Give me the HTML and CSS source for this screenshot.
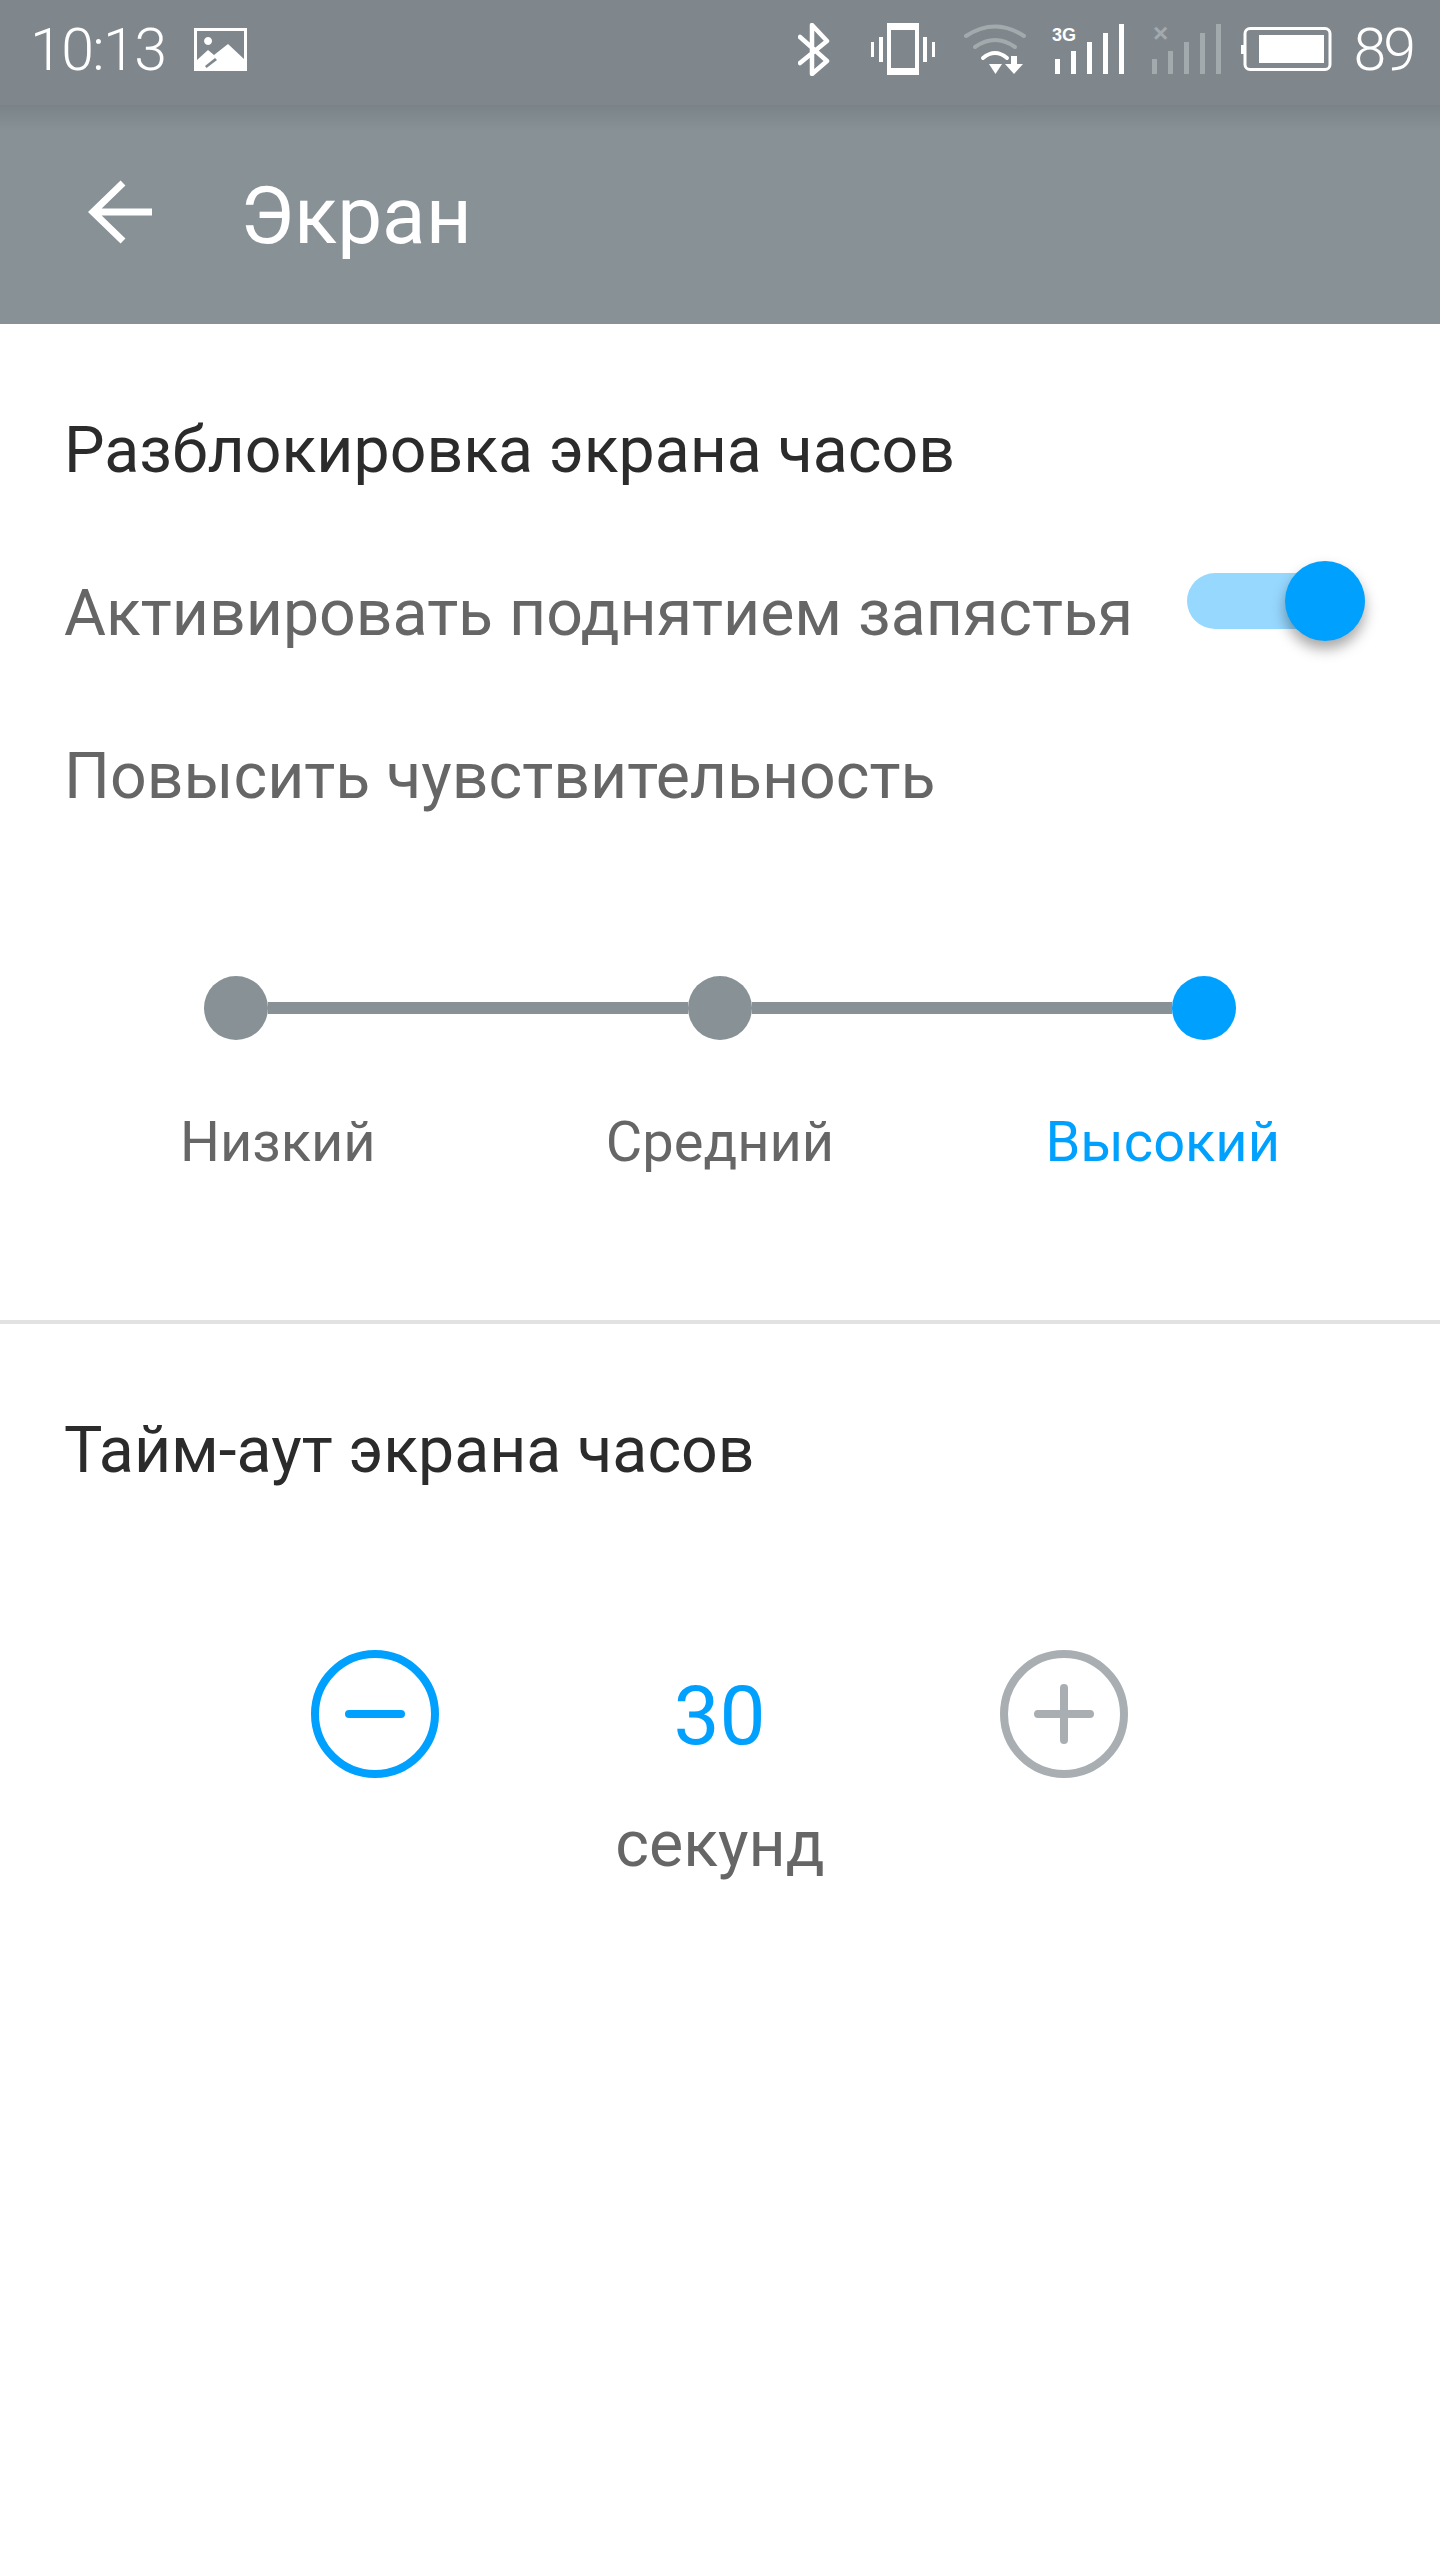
FILE: index.html
```html
<!DOCTYPE html>
<html lang="ru">
<head>
<meta charset="utf-8">
<title>Экран</title>
<link rel="stylesheet" href="styles.css">
</head>
<body>
<header class="status-bar">
  <div class="status-left">
    <span class="clock">10:13</span>
    <svg class="icon-picture" viewBox="0 0 53 43"><path fill="#fff" fill-rule="evenodd" d="M0 0H53V43H0ZM3 3V32L14 22 20 27 34 16 50 31V3ZM14 9a4 4 0 1 0 .1 0ZM21 30 11 38 12.5 40 23 32Z"/></svg>
  </div>
  <div class="status-right">
    <svg class="icon-bt" viewBox="0 0 32 53" fill="none" stroke="#fff" stroke-width="4.500" stroke-linecap="round" stroke-linejoin="round"><path d="M2 14 29 38 14 51V2L29 18 2 40"/></svg>
    <svg class="icon-vib" viewBox="0 0 64 52" fill="#fff"><path fill-rule="evenodd" d="M16 0H48V52H16ZM20 7V45H44V7Z"/><rect x="0" y="19" width="3" height="15"/><rect x="8" y="14" width="4" height="25"/><rect x="52" y="14" width="4" height="25"/><rect x="61" y="19" width="3" height="15"/></svg>
    <svg class="icon-wifi" viewBox="0 0 64 52" fill="none" stroke-linecap="round"><path d="M2 13Q31-6 60 13" stroke="#a3aaae" stroke-width="4"/><path d="M11 24Q31 10 51 24" stroke="#a3aaae" stroke-width="4"/><path d="M19 35Q31 25 43 35" stroke="#fff" stroke-width="4"/><path d="M25 41H38L31.500 51Z" fill="#fff"/><path d="M47 33H53V41H59L50 51 41 41H47Z" fill="#fff"/></svg>
    <svg class="icon-sig" viewBox="0 0 73 50" fill="#fff"><text class="sig-label" x="0" y="17">3G</text><rect x="3" y="35" width="5" height="15"/><rect x="19" y="27" width="5" height="23"/><rect x="35" y="18" width="5" height="32"/><rect x="51" y="9" width="5" height="41"/><rect x="67" y="0" width="5" height="50"/></svg>
    <svg class="icon-sig2" viewBox="0 -8 69 58" fill="#a3aaae"><text class="sig-x" x="1" y="18">×</text><rect x="0" y="35" width="5" height="15"/><rect x="16" y="27" width="5" height="23"/><rect x="32" y="18" width="5" height="32"/><rect x="48" y="9" width="5" height="41"/><rect x="64" y="0" width="5" height="50"/></svg>
    <svg class="icon-bat" viewBox="0 0 91 44"><rect x="4" y="1.500" width="85" height="41" rx="5" fill="none" stroke="#fff" stroke-width="3"/><rect x="0" y="18" width="3" height="9" fill="#fff"/><rect x="18" y="8" width="65" height="28" fill="#fff"/></svg>
    <span class="battery">89</span>
  </div>
</header>

<div class="app-bar">
  <svg class="icon-back" viewBox="0 0 64 64" fill="none" stroke="#fff" stroke-width="7"><path d="M64 32H4M35 3 5 32 35 61"/></svg>
  <h1 class="title">Экран</h1>
</div>

<main>
  <section class="unlock">
    <h2 class="heading">Разблокировка экрана часов</h2>
    <div class="row row-toggle">
      <span class="row-label">Активировать поднятием запястья</span>
      <div class="toggle"><div class="toggle-knob"></div></div>
    </div>
    <div class="row"><span class="row-label">Повысить чувствительность</span></div>
    <div class="slider">
      <span class="dot"></span><span class="bar"></span>
      <span class="dot"></span><span class="bar"></span>
      <span class="dot dot-on"></span>
    </div>
    <div class="levels">
      <span class="level level-low">Низкий</span>
      <span class="level level-mid">Средний</span>
      <span class="level level-high">Высокий</span>
    </div>
  </section>

  <section class="timeout">
    <h2 class="heading">Тайм-аут экрана часов</h2>
    <div class="stepper">
      <svg class="step" viewBox="0 0 128 128" fill="none" stroke="#00a0ff" stroke-width="8" stroke-linecap="round"><circle cx="64" cy="64" r="60"/><path d="M38 64H90"/></svg>
      <span class="value">30</span>
      <svg class="step" viewBox="0 0 128 128" fill="none" stroke="#a8aeb1" stroke-width="8" stroke-linecap="round"><circle cx="64" cy="64" r="60"/><path d="M38 64H90M64 38V90"/></svg>
    </div>
    <div class="unit">секунд</div>
  </section>
</main>
</body>
</html>
```
FILE: styles.css
```css
* { box-sizing: border-box; }
html, body { margin: 0; padding: 0; }
body {
  width: 1440px;
  height: 2560px;
  background: #fff;
  font-family: Roboto, "Noto Sans", sans-serif;
  overflow: hidden;
}

/* status bar */
.status-bar {
  height: 105px;
  background: #7f878d;
  display: flex;
  justify-content: space-between;
  align-items: center;
  color: #fff;
  padding: 0 27px 7px 30px;
}
.status-left, .status-right { display: flex; align-items: center; }
.clock, .battery { font-size: 59px; font-weight: 300; line-height: 1; }
.clock { letter-spacing: -1.6px; }
.battery { margin-left: 22px; letter-spacing: -3px; }
.icon-picture { width: 53px; height: 43px; margin-left: 29px; }
.icon-bt { width: 32px; height: 53px; }
.icon-vib { width: 64px; height: 52px; margin-left: 41px; }
.icon-wifi { width: 64px; height: 52px; margin-left: 29px; }
.icon-sig { width: 73px; height: 50px; margin-left: 24px; }
.icon-sig2 { width: 69px; height: 58px; margin: -8px 0 0 27px; }
.icon-bat { width: 91px; height: 44px; margin-left: 20px; }
.sig-label { font-family: "Liberation Sans", sans-serif; font-size: 18px; font-weight: 700; }
.sig-x { font-family: "Liberation Sans", sans-serif; font-size: 26px; font-weight: 700; }

/* app bar */
.app-bar {
  height: 219px;
  background: linear-gradient(#7b8388 0, #879196 26px);
  display: flex;
  align-items: center;
  padding: 0 0 0 88px;
  color: #fff;
}
.icon-back { width: 64px; height: 64px; margin-bottom: 5px; }
.title { margin: 3px 0 0 88px; font-size: 80px; font-weight: 400; line-height: 1; }

/* sections */
.heading { margin: 0; font-size: 64.4px; font-weight: 400; line-height: 100px; color: #2b2b2b; padding-left: 64px; }
.unlock { padding-top: 76px; height: 1000px; border-bottom: 4px solid #e2e2e2; }
.row {
  display: flex;
  align-items: center;
  height: 100px;
  margin-top: 63px;
  padding-left: 64px;
}
.row-label { font-size: 64.4px; color: #666; line-height: 100px; white-space: nowrap; }
.row-toggle { justify-content: space-between; padding-right: 75px; }

.toggle {
  width: 178px;
  height: 56px;
  border-radius: 28px;
  background: #97d8ff;
  margin-bottom: 24px;
  display: flex;
  justify-content: flex-end;
  align-items: center;
}
.toggle-knob {
  width: 80px;
  height: 80px;
  border-radius: 50%;
  background: #00a0ff;
  box-shadow: 0 8px 14px rgba(0, 0, 0, 0.35);
  flex: none;
}

.slider {
  display: flex;
  align-items: center;
  margin: 150px 204px 0 204px;
  height: 64px;
}
.dot { width: 64px; height: 64px; border-radius: 50%; background: #879196; flex: none; }
.dot-on { background: #00a0ff; }
.bar { flex: 1; height: 12px; background: #879196; }

.levels {
  display: grid;
  grid-template-columns: 1fr 1fr 1fr;
  margin-top: 62px;
  padding: 0 160px 0 160px;
}
.level { font-size: 56px; line-height: 80px; color: #666; text-align: center; }
.level-low { text-align: left; margin-left: 20px; }
.level-mid { text-align: center; }
.level-high { color: #00a0ff; text-align: right; }

.timeout { padding-top: 76px; }
.stepper {
  display: flex;
  align-items: center;
  justify-content: center;
  margin: 150px 1px 0 0;
  gap: 0;
}
.step { width: 128px; height: 128px; flex: none; }
.value { width: 561px; text-align: center; font-size: 82px; line-height: 132px; height: 128px; color: #00a0ff; }
.unit { text-align: center; font-size: 64.5px; line-height: 80px; color: #666; margin-top: 26px; }
```
